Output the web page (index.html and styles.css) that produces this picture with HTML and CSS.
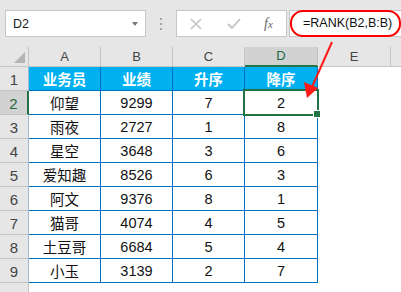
FILE: index.html
```html
<!DOCTYPE html>
<html>
<head>
<meta charset="utf-8">
<link rel="stylesheet" href="styles.css">
</head>
<body>
<div class="app">
  <div class="bar">
    <div class="namebox"><span class="ref">D2</span><span class="drop"></span></div>
    <div class="dots"><i></i><i></i><i></i></div>
    <div class="fbtns">
      <svg class="ic" width="12" height="12" viewBox="0 0 12 12"><path d="M1 1L11 11M11 1L1 11" stroke="#c2c2c2" stroke-width="1.6" fill="none"/></svg>
      <svg class="ic" width="14" height="12" viewBox="0 0 14 12"><path d="M1 6L5 10L13 1" stroke="#c2c2c2" stroke-width="1.8" fill="none"/></svg>
      <span class="fx">f<small>x</small></span>
    </div>
    <div class="finput"><span class="formula">=RANK(B2,B:B)</span></div>
  </div>
  <div class="grid">
    <div class="ch corner"><span class="tri"></span></div>
    <div class="ch">A</div><div class="ch">B</div><div class="ch">C</div><div class="ch sel">D</div><div class="ch">E</div><div class="ch last"></div>

    <div class="rh">1</div>
    <div class="c h">业务员</div><div class="c h">业绩</div><div class="c h">升序</div><div class="c h">降序</div><div class="e"></div><div class="e"></div>

    <div class="rh rsel">2</div>
    <div class="c">仰望</div><div class="c">9299</div><div class="c">7</div><div class="c active">2</div><div class="e"></div><div class="e"></div>

    <div class="rh">3</div>
    <div class="c">雨夜</div><div class="c">2727</div><div class="c">1</div><div class="c">8</div><div class="e"></div><div class="e"></div>

    <div class="rh">4</div>
    <div class="c">星空</div><div class="c">3648</div><div class="c">3</div><div class="c">6</div><div class="e"></div><div class="e"></div>

    <div class="rh">5</div>
    <div class="c">爱知趣</div><div class="c">8526</div><div class="c">6</div><div class="c">3</div><div class="e"></div><div class="e"></div>

    <div class="rh">6</div>
    <div class="c">阿文</div><div class="c">9376</div><div class="c">8</div><div class="c">1</div><div class="e"></div><div class="e"></div>

    <div class="rh">7</div>
    <div class="c">猫哥</div><div class="c">4074</div><div class="c">4</div><div class="c">5</div><div class="e"></div><div class="e"></div>

    <div class="rh">8</div>
    <div class="c">土豆哥</div><div class="c">6684</div><div class="c">5</div><div class="c">4</div><div class="e"></div><div class="e"></div>

    <div class="rh">9</div>
    <div class="c">小玉</div><div class="c">3139</div><div class="c">2</div><div class="c">7</div><div class="e"></div><div class="e"></div>

    <div class="rh blank"></div>
  </div>
  <svg class="arrow" width="401" height="292" viewBox="0 0 401 292">
    <line x1="332" y1="42" x2="312" y2="87" stroke="#ff1a1a" stroke-width="2"/>
    <polygon points="307,98 304,82 318,88" fill="#ff1a1a"/>
  </svg>
</div>
</body>
</html>
```

FILE: styles.css
```css
* { box-sizing: border-box; }
html, body { margin: 0; padding: 0; }
body {
  width: 401px;
  height: 292px;
  overflow: hidden;
  background: #ffffff;
  font-family: "Liberation Sans", "Noto Sans CJK SC", sans-serif;
  color: #000;
}
.app { position: relative; width: 401px; height: 292px; }

.bar {
  height: 47px;
  background: #e6e6e6;
  display: flex;
  align-items: flex-start;
  padding-top: 10px;
}
.namebox {
  margin-left: 5px;
  width: 141px;
  height: 27px;
  background: #fff;
  border: 1px solid #c6c6c6;
  display: flex;
  align-items: center;
  justify-content: space-between;
  padding: 0 7px 0 7px;
}
.ref { font-size: 12.5px; color: #222; }
.drop {
  width: 0; height: 0;
  border-left: 3.5px solid transparent;
  border-right: 3.5px solid transparent;
  border-top: 4px solid #777;
}
.dots {
  width: 30px;
  height: 27px;
  display: flex;
  flex-direction: column;
  align-items: center;
  justify-content: center;
  gap: 3px;
}
.dots i { display: block; width: 2px; height: 2px; background: #a8a8a8; }
.fbtns {
  width: 111px;
  height: 27px;
  background: #fff;
  border: 1px solid #c6c6c6;
  display: flex;
  align-items: center;
  padding-left: 13px;
}
.fbtns .ic:nth-child(1) { margin-right: 25px; }
.fbtns .ic:nth-child(2) { margin-right: 23px; }
.fx {
  font-family: "Liberation Serif", serif;
  font-style: italic;
  font-size: 14px;
  color: #666;
}
.fx small { font-size: 11px; }
.finput {
  margin-left: 2px;
  flex: 1;
  height: 27px;
  background: #fff;
  border: 1px solid #c6c6c6;
  border-right: none;
  display: flex;
  align-items: center;
}
.formula {
  height: 27px;
  margin-left: 0;
  width: 111px;
  border: 2px solid #ff0000;
  border-radius: 13px;
  display: flex;
  align-items: center;
  padding-left: 11px;
  font-size: 12.5px;
  color: #111;
  margin-top: -1px;
}

.grid {
  display: grid;
  grid-template-columns: 29px 72px 72px 72px 73px 73px 1fr;
  grid-template-rows: 20px repeat(9, 24px) 1fr;
  height: 245px;
}
.ch {
  background: #e6e6e6;
  border-right: 1px solid #c4c4c4;
  border-bottom: 1px solid #c4c4c4;
  font-size: 13px;
  color: #444;
  display: flex;
  align-items: center;
  justify-content: center;
  padding-bottom: 1px;
}
.ch.last { border-right: none; }
.ch.sel {
  background: #d2d2d2;
  color: #1e6b40;
  border-bottom: 2px solid #217346;
}
.corner { position: relative; }
.tri {
  position: absolute;
  right: 3px;
  bottom: 3px;
  width: 0; height: 0;
  border-left: 11px solid transparent;
  border-bottom: 11px solid #b4b4b4;
}
.rh {
  background: #e6e6e6;
  border-right: 1px solid #9fb8d4;
  border-bottom: 1px solid #c4c4c4;
  font-size: 15px;
  color: #444;
  display: flex;
  align-items: center;
  justify-content: center;
  padding-top: 1px;
}
.rh.rsel {
  background: #d2d2d2;
  color: #1e6b40;
  border-right: 2px solid #217346;
}
.rh.blank { border-right: 1px solid #c4c4c4; border-bottom: none; }
.c {
  border-right: 1px solid #0070c0;
  border-bottom: 1px solid #0070c0;
  font-size: 14.5px;
  display: flex;
  align-items: center;
  justify-content: center;
  color: #111;
}
.c.h {
  background: #00b0f0;
  color: #fff;
  font-weight: bold;
  font-size: 14.5px;
}
.c.active { position: relative; }
.c.active::before {
  content: "";
  position: absolute;
  left: -2px; top: -2px; right: -2px; bottom: -2px;
  border: 2px solid #217346;
}
.c.active::after {
  content: "";
  position: absolute;
  right: -4px; bottom: -4px;
  width: 6px; height: 6px;
  background: #217346;
  border: 1px solid #fff;
}
.e { }
.arrow { position: absolute; left: 0; top: 0; pointer-events: none; }
```
